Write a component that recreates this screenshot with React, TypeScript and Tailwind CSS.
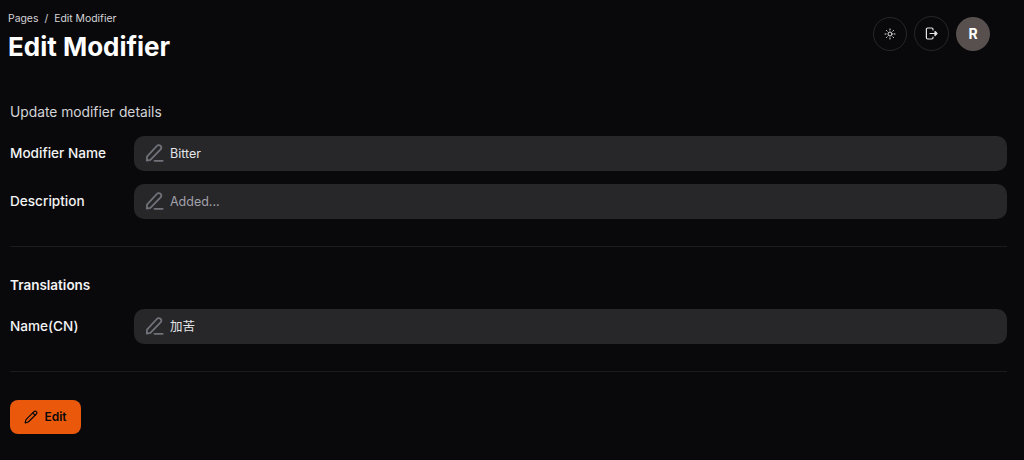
import { Pencil, Sun } from "lucide-react";

function PenIcon() {
  return (
    <svg width="20" height="20" viewBox="0 0 20 20" fill="none" stroke="#71717a" strokeWidth="1.8" strokeLinecap="round" strokeLinejoin="round" className="mb-[1px] shrink-0">
      <path d="M2 13.600 11.800 3c1-1.100 2.800-1.100 3.800-.1 1 1 1 2.500 0 3.500L5.400 16.800l-3.600.8z" />
      <path d="M9.500 17.800h8.200" />
    </svg>
  );
}

function Field({ label, value, muted }: { label: string; value: string; muted?: boolean }) {
  return (
    <div className="flex items-center">
      <div className="w-[124px] shrink-0 text-[13.6px] font-medium text-[#f4f4f5]">{label}</div>
      <div className="flex h-[35px] flex-1 items-center gap-[5px] rounded-[10px] bg-[#27272a] pl-[11px]">
        <PenIcon />
        <span className={`pt-[1px] text-[12.5px] ${muted ? "text-[#a1a1aa]" : "text-[#e4e4e7]"}`}>{value}</span>
      </div>
    </div>
  );
}

export default function App() {
  return (
    <div
      className="flex h-[460px] w-[1024px] flex-col overflow-hidden bg-[#09090b] text-white"
      style={{ fontFamily: 'Inter, "Noto Sans CJK SC", sans-serif' }}
    >
      <header className="flex items-start justify-between pl-[8px] pr-[34px] pt-[12px]">
        <div>
          <div className="flex h-[13px] items-end gap-[6px] text-[10.4px] leading-[12px] text-[#d4d4d8]">
            <span>Pages</span>
            <span>/</span>
            <span>Edit Modifier</span>
          </div>
          <h1 className="mt-[5px] text-[26px] font-bold leading-[34px] text-white">Edit Modifier</h1>
        </div>
        <div className="mt-[4px] flex items-center gap-[7px]">
          <button className="flex h-[34px] w-[34px] items-center justify-center rounded-full border border-[#27272a] text-[#e4e4e7]">
            <Sun size={12} />
          </button>
          <button className="flex h-[35px] w-[35px] items-center justify-center rounded-full border border-[#27272a] text-[#e4e4e7]">
            <svg width="13" height="13" viewBox="0 0 13 13" fill="none" stroke="currentColor" strokeWidth="1.2" strokeLinecap="round" strokeLinejoin="round">
              <path d="M8 3V2.200C8 1.500 7.500 1 6.800 1H2.600C1.900 1 1.400 1.500 1.400 2.200v8.600c0 .7.5 1.200 1.200 1.200h4.200c.7 0 1.200-.5 1.200-1.200V10" />
              <path d="M5 6.500h5.500" />
              <path d="M10 4.500 12 6.500 10 8.500z" fill="currentColor" />
            </svg>
          </button>
          <div className="flex h-[34px] w-[34px] items-center justify-center rounded-full bg-[#57504e] text-[14px] font-bold text-white">R</div>
        </div>
      </header>

      <main className="flex flex-col pl-[10px] pr-[17px] pt-[38px]">
        <p className="text-[13.8px] leading-[20px] text-[#d4d4d8]">Update modifier details</p>
        <div className="mt-[14px] flex flex-col gap-[13px]">
          <Field label="Modifier Name" value="Bitter" />
          <Field label="Description" value="Added..." muted />
        </div>
        <div className="mt-[27px] h-px bg-[#1c1c1f]" />
        <h2 className="mt-[28px] text-[13.5px] font-semibold leading-[20px] text-[#f4f4f5]">Translations</h2>
        <div className="mt-[14px]">
          <Field label="Name(CN)" value="加苦" />
        </div>
        <div className="mt-[27px] h-px bg-[#1c1c1f]" />
        <button className="mt-[28px] flex h-[34px] w-[71px] items-center justify-center gap-[6px] rounded-[8px] bg-[#ea580c] text-[12px] font-semibold text-[#09090b]">
          <Pencil size={14} />
          Edit
        </button>
      </main>
    </div>
  );
}
